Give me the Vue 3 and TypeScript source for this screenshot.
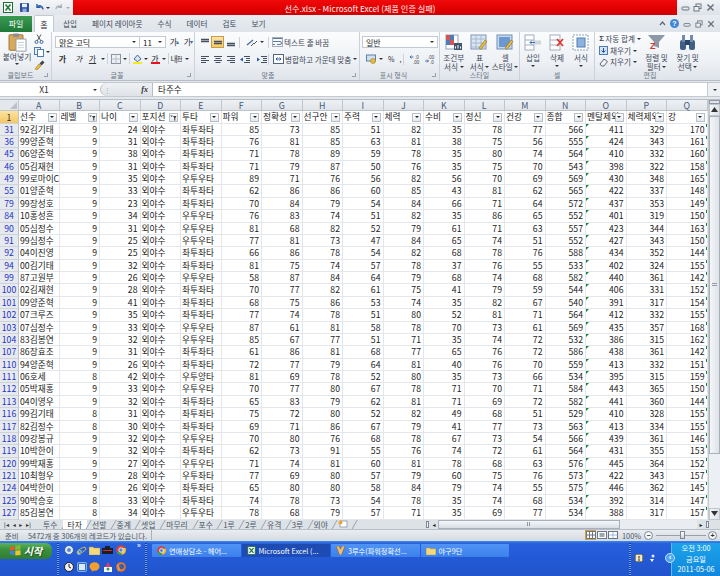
<script setup lang="ts">
const letters = 'ABCDEFGHIJKLMNOPQ'.split('');
const headers = ['선수', '레벨', '나이', '포지션', '투타', '파워', '정확성', '선구안', '주력', '체력', '수비', '정신', '건강', '종합', '멘탈제외', '체력제외', '강'];
const filtered = [1, 3];

// 행번호 이름 레벨 나이 투타 + 능력치
const raw = `31 92김기태 9 24 좌투좌타 85 73 85 51 82 35 78 77 566 411 329 170
36 99양준혁 9 31 좌투좌타 76 81 85 63 81 38 75 56 555 424 343 161
45 06양준혁 9 38 좌투좌타 71 78 89 59 78 35 80 74 564 410 332 160
46 05김재현 9 31 좌투좌타 71 79 87 50 76 35 75 70 543 398 322 158
49 99로마이C 9 35 우투우타 89 71 76 56 82 56 70 69 569 430 348 165
55 01양준혁 9 33 좌투좌타 62 86 86 60 85 43 81 62 565 422 337 148
79 99장성호 9 23 좌투좌타 70 84 79 54 84 66 71 64 572 437 353 149
84 10홍성흔 9 34 우투우타 76 83 74 51 82 35 86 65 552 401 319 150
90 05심정수 9 31 우투우타 81 68 82 52 79 61 71 63 557 423 344 163
91 99심정수 9 25 우투우타 77 81 73 47 84 65 74 51 552 427 343 150
92 04이진영 9 25 좌투좌타 66 86 78 54 82 68 78 76 588 434 352 144
94 00김기태 9 32 좌투좌타 81 75 74 57 78 37 76 55 533 402 324 155
99 87고원부 9 26 우투우타 58 87 84 64 79 68 74 68 582 440 361 142
100 02김재현 9 28 좌투좌타 70 77 82 61 75 41 79 59 544 406 331 152
101 09양준혁 9 41 좌투좌타 68 75 86 53 74 35 82 67 540 391 317 154
102 07크루즈 9 35 좌투좌타 77 74 78 51 80 52 81 71 564 412 332 155
103 07심정수 9 33 우투우타 87 61 81 58 78 70 73 61 569 435 357 168
104 83김봉연 9 32 우투우타 85 67 77 51 71 35 74 72 532 386 315 162
107 86장효조 9 31 좌투좌타 61 86 81 68 77 65 76 72 586 438 361 142
110 94양준혁 9 26 좌투좌타 72 77 79 64 81 40 76 70 559 413 332 151
111 06호세 8 42 우투양타 81 69 78 52 80 35 73 66 534 395 315 159
112 05박재홍 9 33 우투우타 70 77 80 67 78 71 70 71 584 443 365 150
113 04이영우 9 32 좌투좌타 65 83 79 62 81 71 69 72 582 441 360 144
116 99김기태 8 31 좌투좌타 75 72 80 52 82 49 68 51 529 410 328 155
117 82김정수 8 30 좌투좌타 69 71 86 67 79 41 77 73 563 413 334 155
118 09강봉규 9 32 우투우타 70 80 76 68 78 67 73 54 566 439 361 146
119 10박한이 9 32 좌투좌타 62 73 91 55 76 74 72 61 564 431 355 153
120 99박재홍 9 27 우투우타 71 74 81 60 81 78 68 63 576 445 364 152
121 10최형우 9 28 우투좌타 77 69 80 57 79 60 75 76 573 422 343 157
124 04박한이 9 26 좌투좌타 65 80 80 58 84 79 74 55 575 446 362 145
125 90박승호 8 33 좌투좌타 74 78 73 54 78 35 74 68 534 392 314 147
127 85김봉연 8 34 우투우타 78 68 79 57 71 35 69 77 534 388 317 157`;

const rows = raw.split('\n').map((line) => {
  const p = line.split(' ');
  return { no: p[0], cells: [p[1], p[2], p[3], '외야수', ...p.slice(4)] };
});

const tabs = ['투수', '타자', '선발', '중계', '셋업', '마무리', '포수', '1루', '2루', '유격', '3루', '외야'];
const menu = ['삽입', '페이지 레이아웃', '수식', '데이터', '검토', '보기'];
</script>

<template>
  <div class="excel">
    <!-- 제목 표시줄 -->
    <header class="titlebar">
      <div class="qat">
        <svg width="10" height="11" viewBox="0 0 10 11"><rect x=".5" y=".5" width="9" height="10" fill="#fff" stroke="#1f6d33" /><path d="M2.5 2.5l5 6M7.5 2.5l-5 6" stroke="#1f7a3a" stroke-width="1.6" /></svg>
        <i class="qsep"></i>
        <svg width="9" height="9" viewBox="0 0 9 9"><rect width="9" height="9" rx="1" fill="#2b4f9e" /><rect x="2" y=".6" width="5" height="3.6" fill="#e6eefb" /><rect x="2.4" y="5.6" width="4.2" height="3.4" fill="#8fa8d8" /></svg>
        <svg class="ml5" width="10" height="9" viewBox="0 0 10 9"><path d="M3 1v3.4h3.6" fill="none" stroke="#2a5caa" stroke-width="1.4" /><path d="M3.2 4.2C5 2 8.5 2.6 9 6.4" fill="none" stroke="#2a5caa" stroke-width="1.6" /></svg>
        <i class="caret dark"></i>
        <svg class="ml5" width="9" height="9" viewBox="0 0 10 9"><path d="M7 1v3.4H3.400M6.800 4.200C5 2 1.500 2.600 1 6.400" fill="none" stroke="#a7adb5" stroke-width="1.4" /></svg>
        <i class="caret"></i>
        <i class="qsep ml5"></i>
        <svg width="6" height="7" viewBox="0 0 6 7"><path d="M0 1h6M1 4h4l-2 2.5z" stroke="#333" fill="#333" stroke-width=".8" /></svg>
      </div>
      <div class="title">선수.xlsx - Microsoft Excel (제품 인증 실패)</div>
      <div class="winctl">
        <svg width="9" height="9" viewBox="0 0 9 9"><rect x="1" y="4" width="7" height="3" rx="1" fill="none" stroke="#6b7682" /></svg>
        <svg width="9" height="9" viewBox="0 0 9 9"><rect x="3" y="1" width="5" height="4.5" fill="#eef1f4" stroke="#6b7682" /><rect x="1" y="3.5" width="5" height="4.5" fill="#eef1f4" stroke="#6b7682" /></svg>
        <svg width="9" height="9" viewBox="0 0 9 9"><path d="M1.5 1.5l6 6M7.5 1.5l-6 6" stroke="#6b7682" stroke-width="1.6" /></svg>
      </div>
    </header>

    <!-- 리본 탭 -->
    <nav class="tabsbar">
      <div class="file-tab">파일</div>
      <div class="home-tab">홈</div>
      <div v-for="m in menu" :key="m" class="menu-tab">{{ m }}</div>
      <div class="help-icons">
        <svg width="7" height="7" viewBox="0 0 7 7"><path d="M1 5l2.5-3L6 5" fill="none" stroke="#5b6672" stroke-width="1.2" /></svg>
        <span class="help">?</span>
        <svg width="8" height="8" viewBox="0 0 9 9"><rect x="1" y="4" width="7" height="3" rx="1" fill="none" stroke="#6b7682" /></svg>
        <svg width="8" height="8" viewBox="0 0 9 9"><rect x="3" y="1" width="5" height="4.5" fill="#eef1f4" stroke="#6b7682" /><rect x="1" y="3.5" width="5" height="4.5" fill="#eef1f4" stroke="#6b7682" /></svg>
        <svg width="8" height="8" viewBox="0 0 9 9"><path d="M1.5 1.5l6 6M7.5 1.5l-6 6" stroke="#6b7682" stroke-width="1.5" /></svg>
      </div>
    </nav>

    <!-- 리본 -->
    <section class="ribbon">
      <div class="group g-clip">
        <div class="g-body clip-body">
          <div class="big paste">
            <svg width="19" height="19" viewBox="0 0 19 22" preserveAspectRatio="none"><rect x="1" y="2" width="14" height="18" rx="1" fill="#d9a95a" stroke="#9a7433" /><rect x="5" y=".5" width="6" height="4" rx="1" fill="#8f8f8f" /><path d="M8 7h10v14H8z" fill="#fff" stroke="#8d99a8" /><path d="M10 11h6M10 14h6M10 17h6" stroke="#c5ccd6" /></svg>
            <span>붙여넣기</span>
            <i class="caret dark"></i>
          </div>
          <div class="clip-tools">
            <svg width="10" height="10" viewBox="0 0 10 10"><circle cx="2.5" cy="8" r="1.5" fill="none" stroke="#3b6aa8" /><circle cx="7.5" cy="8" r="1.5" fill="none" stroke="#3b6aa8" /><path d="M3.2 6.8L7 .5M6.8 6.800L3 .5" stroke="#555" /></svg>
            <div class="row-c">
              <svg width="10" height="10" viewBox="0 0 10 10"><rect x=".5" y=".5" width="6" height="7" fill="#eaf1fb" stroke="#4d7db8" /><rect x="3.5" y="2.5" width="6" height="7" fill="#fff" stroke="#4d7db8" /></svg>
              <i class="caret dark"></i>
            </div>
            <svg width="11" height="10" viewBox="0 0 11 10"><path d="M1 9l4-5 2 2-4 4z" fill="#e8b93e" stroke="#9a7a20" stroke-width=".6" /><path d="M5.5 3.5l3-3 2 2-3 3z" fill="#444" /></svg>
          </div>
        </div>
        <div class="g-label">클립보드<i class="launcher"></i></div>
      </div>

      <div class="group g-font">
        <div class="g-body tool-rows">
          <div class="row-c">
            <div class="combo name">맑은 고딕<i class="caret dark"></i></div>
            <div class="combo size">11<i class="caret dark"></i></div>
            <span class="t-glyph up ml3">가<em>▴</em></span>
            <span class="t-glyph up ml3">가<em>▾</em></span>
          </div>
          <div class="row-c r2">
            <span class="t-glyph b">가</span>
            <span class="t-glyph i">가</span>
            <span class="t-glyph u">가</span><i class="caret dark"></i>
            <i class="vsep"></i>
            <svg width="10" height="10" viewBox="0 0 10 10"><rect x=".5" y=".5" width="9" height="9" fill="none" stroke="#8a93a0" /><path d="M5 .5v9M.5 5h9" stroke="#b5bcc6" /></svg>
            <i class="caret dark"></i>
            <i class="vsep"></i>
            <span class="swatch first">
              <svg width="11" height="8" viewBox="0 0 11 8"><path d="M2 5l3.5-4L9 5 5.5 7.5z" fill="#dfe6ef" stroke="#3f6aa5" /></svg>
              <b class="bar yellow"></b>
            </span>
            <i class="caret dark"></i>
            <span class="swatch"><span class="t-glyph sw">가</span><b class="bar red"></b></span>
            <i class="caret dark"></i>
            <i class="vsep"></i>
            <span class="t-glyph wrapk">내<em class="blue">천</em></span><i class="caret dark"></i>
          </div>
        </div>
        <div class="g-label">글꼴<i class="launcher"></i></div>
      </div>

      <div class="group g-align">
        <div class="g-body tool-rows">
          <div class="row-c">
            <span class="al"><svg width="10" height="9" viewBox="0 0 10 9"><path d="M1 1.5h8M1 3.5h8" stroke="#44505e" stroke-width="1.3" /></svg></span>
            <span class="al on"><svg width="10" height="9" viewBox="0 0 10 9"><path d="M1 3.5h8M1 5.5h8" stroke="#44505e" stroke-width="1.3" /></svg></span>
            <span class="al"><svg width="10" height="9" viewBox="0 0 10 9"><path d="M1 5.5h8M1 7.5h8" stroke="#44505e" stroke-width="1.3" /></svg></span>
            <i class="vsep"></i>
            <svg class="ml3" width="12" height="9" viewBox="0 0 12 9"><path d="M1 7L7 2" stroke="#4d6f9e" stroke-width="1.4" /><path d="M5 8l3-3M8 6l3-3" stroke="#555" /></svg>
            <i class="caret dark"></i>
            <i class="vsep s2"></i>
            <svg class="ml3" width="11" height="10" viewBox="0 0 11 10"><path d="M1 1.5h9M1 4.5h7a1.5 1.5 0 0 1 0 3H5M1 7.5h2" fill="none" stroke="#5c7aa0" /><rect x=".5" y=".5" width="10" height="9" fill="none" stroke="#a4aeba" /></svg>
            <span class="lbl">텍스트 줄 바꿈</span>
          </div>
          <div class="row-c r2">
            <span class="al"><svg width="10" height="9" viewBox="0 0 10 9"><path d="M1 1.5h8M1 3.5h5M1 5.5h8M1 7.5h5" stroke="#44505e" /></svg></span>
            <span class="al"><svg width="10" height="9" viewBox="0 0 10 9"><path d="M1 1.5h8M2.5 3.5h5M1 5.5h8M2.5 7.5h5" stroke="#44505e" /></svg></span>
            <span class="al"><svg width="10" height="9" viewBox="0 0 10 9"><path d="M1 1.5h8M4 3.5h5M1 5.5h8M4 7.5h5" stroke="#44505e" /></svg></span>
            <svg class="ml2" width="12" height="9" viewBox="0 0 12 9"><path d="M5 1.5h6M7 3.5h4M7 5.5h4M5 7.5h6" stroke="#44505e" /><path d="M4 2.5L1 4.5l3 2z" fill="#2a5caa" /></svg>
            <svg class="ml5" width="12" height="9" viewBox="0 0 12 9"><path d="M5 1.5h6M7 3.5h4M7 5.5h4M5 7.5h6" stroke="#44505e" /><path d="M1 2.5l3 2-3 2z" fill="#2a5caa" /></svg>
            <i class="vsep s3"></i>
            <svg class="ml3" width="11" height="10" viewBox="0 0 11 10"><rect x=".5" y=".5" width="10" height="9" fill="#fff" stroke="#55667c" /><path d="M3 5h5M3 5l1.500-1.500M3 5l1.500 1.500M8 5L6.500 3.500M8 5L6.500 6.500" stroke="#2a5caa" /></svg>
            <span class="lbl">병합하고 가운데 맞춤</span>
            <i class="caret dark"></i>
          </div>
        </div>
        <div class="g-label">맞춤<i class="launcher"></i></div>
      </div>

      <div class="group g-num">
        <div class="g-body tool-rows">
          <div class="combo num">일반<i class="caret dark"></i></div>
          <div class="row-c r2 num-row">
            <svg class="ml3" width="11" height="10" viewBox="0 0 11 10"><rect x=".5" y="1" width="9" height="6" fill="#cfe0f3" stroke="#5d7fa8" /><circle cx="7" cy="7" r="2.5" fill="#e6be3d" stroke="#a1831f" stroke-width=".6" /></svg>
            <i class="caret dark"></i>
            <span class="sym ml5">%</span>
            <span class="sym ml5">,</span>
            <i class="vsep"></i>
            <svg class="ml3" width="12" height="10" viewBox="0 0 12 10"><text x="5" y="4.5" font-size="4.500" fill="#444" font-family="'Liberation Sans',sans-serif">.0</text><text x="3" y="9.500" font-size="4.500" fill="#444" font-family="'Liberation Sans',sans-serif">.00</text><path d="M0 3h3.500M1.500 1.500L0 3l1.500 1.500" fill="none" stroke="#2a5caa" stroke-width=".8" /></svg>
            <svg class="ml3" width="12" height="10" viewBox="0 0 12 10"><text x="3" y="4.500" font-size="4.500" fill="#444" font-family="'Liberation Sans',sans-serif">.00</text><text x="5" y="9.500" font-size="4.500" fill="#444" font-family="'Liberation Sans',sans-serif">.0</text><path d="M0 7h3.500M2 5.500L3.500 7 2 8.500" fill="none" stroke="#2a5caa" stroke-width=".8" /></svg>
          </div>
        </div>
        <div class="g-label">표시 형식<i class="launcher"></i></div>
      </div>

      <div class="group g-style">
        <div class="g-body bigs">
          <div class="big w25">
            <svg width="18" height="17" viewBox="0 0 18 17"><rect x="1" y="1" width="12" height="14" fill="#fff" stroke="#8fa3bb" /><rect x="1" y="1" width="4" height="5" fill="#d9534f" /><rect x="5" y="1" width="4" height="5" fill="#4a7ebb" /><rect x="1" y="6" width="4" height="5" fill="#4a7ebb" /><rect x="5" y="6" width="4" height="5" fill="#d9534f" /><rect x="9" y="9" width="8" height="7" fill="#40566f" /><path d="M10.5 14.500v-2M13 14.500v-3.500M15.500 14.500v-2" stroke="#fff" /></svg>
            <span>조건부</span><span>서식 <i class="caret dark in"></i></span>
          </div>
          <div class="big w25">
            <svg width="18" height="17" viewBox="0 0 18 17"><rect x="1" y="1" width="15" height="14" fill="#dce7f4" stroke="#7f97b3" /><path d="M1 5h15M1 9h15M1 13h15M6 1v14M11 1v14" stroke="#a6b9cf" /><path d="M9 14l6-8 2 1.500-6 8z" fill="#e8b93e" stroke="#7b6420" stroke-width=".5" /></svg>
            <span>표</span><span>서식 <i class="caret dark in"></i></span>
          </div>
          <div class="big w25">
            <svg width="18" height="17" viewBox="0 0 18 17"><rect x="1" y="1" width="15" height="14" fill="#c8daf0" stroke="#6d8db2" /><rect x="3" y="3" width="11" height="10" fill="#6c99d1" /><path d="M9 14l6-8 2 1.500-6 8z" fill="#e8b93e" stroke="#7b6420" stroke-width=".5" /></svg>
            <span>셀</span><span>스타일 <i class="caret dark in"></i></span>
          </div>
        </div>
        <div class="g-label plain">스타일</div>
      </div>

      <div class="group g-cell">
        <div class="g-body bigs cells">
          <div class="big w24">
            <svg width="18" height="17" viewBox="0 0 18 17"><rect x="1" y="1" width="9" height="15" fill="#fff" stroke="#a2aebb" /><path d="M1 6h9M1 11h9" stroke="#a2aebb" /><rect x="10" y="6.5" width="7" height="4" fill="#cfd6de" /><path d="M11 8.500H6M6 8.500l2-2M6 8.500l2 2" stroke="#3e6fae" /></svg>
            <span>삽입</span><i class="caret dark"></i>
          </div>
          <div class="big w24">
            <svg width="18" height="17" viewBox="0 0 18 17"><rect x="2" y="1" width="10" height="15" fill="#fff" stroke="#a2aebb" /><path d="M2 6h10M2 11h10" stroke="#a2aebb" /><path d="M9 5l6 7M15 5l-6 7" stroke="#e03a2e" stroke-width="1.8" /></svg>
            <span>삭제</span><i class="caret dark"></i>
          </div>
          <div class="big w24">
            <svg width="18" height="17" viewBox="0 0 18 17"><rect x="1" y="1" width="15" height="15" fill="#fff" stroke="#8fa3bb" stroke-dasharray="2 1" /><rect x="5" y="4" width="8" height="9" fill="#8fb2dd" stroke="#4d7db8" /></svg>
            <span>서식</span><i class="caret dark"></i>
          </div>
        </div>
        <div class="g-label plain">셀</div>
      </div>

      <div class="group g-edit">
        <div class="g-body edit-body">
          <div class="edit-list">
            <div class="row-c"><b class="sigma">Σ</b><span class="lbl">자동 합계</span><i class="caret dark"></i></div>
            <div class="row-c">
              <svg width="9" height="9" viewBox="0 0 9 9"><rect x=".5" y=".5" width="8" height="8" fill="#d5e4f6" stroke="#4d7db8" /><path d="M4.5 2v4M2.500 4.500l2 2 2-2" fill="none" stroke="#1f4f94" /></svg>
              <span class="lbl">채우기</span><i class="caret dark"></i>
            </div>
            <div class="row-c">
              <svg width="9" height="9" viewBox="0 0 9 9"><path d="M1 6l4-5 3.500 2.500L5 8H2.500z" fill="#f2f2f2" stroke="#5a6775" /></svg>
              <span class="lbl">지우기</span><i class="caret dark"></i>
            </div>
          </div>
          <div class="big w31">
            <svg width="19" height="17" viewBox="0 0 19 17"><path d="M1 1h17l-6 7v6l-5-2V8z" fill="#8d99a8" /><text x="3" y="15" font-size="9" font-weight="700" fill="#d23a2f" font-family="'Liberation Sans',sans-serif">Z</text></svg>
            <span>정렬 및</span><span>필터 <i class="caret dark in"></i></span>
          </div>
          <div class="big w31">
            <svg width="17" height="17" viewBox="0 0 17 17"><rect x="1" y="6" width="6" height="10" rx="2" fill="#3f5f88" /><rect x="10" y="6" width="6" height="10" rx="2" fill="#3f5f88" /><rect x="3" y="1" width="3" height="7" fill="#6f8cb0" /><rect x="11" y="1" width="3" height="7" fill="#6f8cb0" /><rect x="6" y="6" width="5" height="5" fill="#2b4668" /></svg>
            <span>찾기 및</span><span>선택 <i class="caret dark in"></i></span>
          </div>
        </div>
        <div class="g-label plain edit-label">편집</div>
      </div>
    </section>

    <!-- 수식 입력줄 -->
    <section class="formula">
      <div class="namebox">X1<i class="caret dark"></i></div>
      <div class="fx-area"><span class="pill">⋮</span><em>fx</em></div>
      <div class="finput">타주수</div>
      <div class="fdown"><i class="caret dark"></i></div>
    </section>

    <!-- 시트 -->
    <section class="sheet">
      <div class="grid">
        <div class="corner"><i></i></div>
        <div v-for="l in letters" :key="l" class="col-head">{{ l }}</div>

        <div class="row-head selected">1</div>
        <div v-for="(h, i) in headers" :key="h" class="cell head-cell">
          <span class="clip">{{ h }}</span>
          <span class="filter">
            <svg v-if="filtered.includes(i)" width="7" height="7" viewBox="0 0 7 7"><path d="M3 2h3.5L5.300 4v2.500H4.300V4z" fill="#333" /><path d="M1.5 3L.2 1.500h2.600z" fill="#333" /></svg>
            <i v-else class="tri"></i>
          </span>
        </div>

        <template v-for="r in rows" :key="r.no">
          <div class="row-head">{{ r.no }}</div>
          <div
            v-for="(c, i) in r.cells"
            :key="i"
            class="cell"
            :class="{ left: i === 0 || i === 3 || i === 4, flag: i === 14, flagend: i === 16 }"
          >{{ c }}</div>
        </template>
      </div>

      <div class="vscroll">
        <i class="split"></i>
        <span class="sb-btn"><svg width="7" height="5" viewBox="0 0 7 5"><path d="M3.5 0L7 5H0z" fill="#333" /></svg></span>
        <div class="vthumb"><i></i></div>
        <div class="vtrack"></div>
        <span class="sb-btn"><svg width="7" height="5" viewBox="0 0 7 5"><path d="M3.5 5L7 0H0z" fill="#333" /></svg></span>
      </div>
    </section>

    <!-- 시트 탭 -->
    <section class="sheetbar">
      <div class="nav">
        <span>|◂</span><span>◂</span><span>▸</span><span>▸|</span>
      </div>
      <div class="sheet-tabs">
        <span
          v-for="t in tabs"
          :key="t"
          class="stab"
          :class="{ active: t === '타자', wide: t === '마무리', narrow: t.endsWith('루') && t !== '마무리' }"
        >{{ t }}</span>
        <span class="stab add">
          <svg width="10" height="8" viewBox="0 0 10 8"><rect x="2" y="1" width="7" height="6" fill="#fff" stroke="#7c8b9c" stroke-width=".7" /><circle cx="2.5" cy="2.5" r="2" fill="#e9a829" /></svg>
        </span>
      </div>
      <div class="hscroll">
        <i class="hsplit"></i>
        <span class="harrow">◂</span>
        <div class="hthumb"><i></i></div>
        <div class="htrack"></div>
        <span class="harrow">▸</span>
        <i class="hsplit"></i>
      </div>
    </section>

    <!-- 상태 표시줄 -->
    <footer class="status">
      <span class="ready">준비</span>
      <span class="rec">5472개 중 306개의 레코드가 있습니다.</span>
      <i class="st-sep"></i>
      <div class="views">
        <span class="view on"><svg width="10" height="8" viewBox="0 0 10 8"><rect x=".5" y=".5" width="9" height="7" fill="#fff" stroke="#6b7682" /><path d="M3.5 .5v7M6.5 .5v7M.5 4h9" stroke="#6b7682" /></svg></span>
        <span class="view"><svg width="10" height="8" viewBox="0 0 10 8"><rect x=".5" y=".5" width="9" height="7" fill="#fff" stroke="#6b7682" /><rect x="2.5" y="2" width="5" height="4" fill="#9aa6b3" /></svg></span>
        <span class="view"><svg width="10" height="8" viewBox="0 0 10 8"><rect x=".5" y=".5" width="9" height="7" fill="#fff" stroke="#6b7682" /><path d="M5 .5v7M.5 4h9" stroke="#4d7db8" stroke-dasharray="1 1" /></svg></span>
      </div>
      <span class="zoom">100%</span>
      <span class="zbtn">−</span>
      <div class="slider"><i></i></div>
      <span class="zbtn">+</span>
    </footer>

    <!-- 작업 표시줄 -->
    <footer class="taskbar">
      <div class="start">
        <svg width="11" height="11" viewBox="0 0 11 11"><path d="M0 2l4.5-1v4L0 5.500z" fill="#e8592b" /><path d="M5.300 .8L10.500 0v4.500L5.300 5z" fill="#7dbb3c" /><path d="M0 6.200l4.500-.4v4.200L0 9.500z" fill="#3f82d8" /><path d="M5.300 5.700l5.200-.4V10l-5.200.5z" fill="#f0c32e" /></svg>
        <span>시작</span>
      </div>
      <i class="dots"></i>
      <div class="quick">
        <svg width="10" height="10" viewBox="0 0 10 10"><circle cx="5" cy="5" r="4.5" fill="#dde7f3" stroke="#345c96" /><circle cx="5" cy="5" r="2" fill="#5d8ac4" /></svg>
        <svg width="11" height="11" viewBox="0 0 11 11"><text x="1" y="9.500" font-size="11" font-style="italic" font-weight="700" fill="#6fc2f4" font-family="'Liberation Serif',serif">e</text><ellipse cx="5.5" cy="5.5" rx="5" ry="2" fill="none" stroke="#f2c230" stroke-width=".8" transform="rotate(-30 5.5 5.5)" /></svg>
        <svg width="11" height="9" viewBox="0 0 11 9"><path d="M0 1h4l1 1h6v7H0z" fill="#f5d978" stroke="#b5902c" stroke-width=".5" /></svg>
        <svg width="11" height="8" viewBox="0 0 11 8"><rect y="2" width="11" height="6" fill="#1d1d2a" /><rect x="3" width="5" height="3" fill="#1d1d2a" /><rect x="1" y="4" width="9" height="1" fill="#c33" /></svg>
        <svg width="10" height="10" viewBox="0 0 10 10"><circle cx="5" cy="5" r="4.8" fill="#d9432f" /><path d="M5 5L.8 7.400A4.800 4.800 0 0 0 6 9.700z" fill="#3ea24c" /><path d="M5 5l1 4.700A4.800 4.800 0 0 0 9.500 3H5z" fill="#f3c42f" /><circle cx="5" cy="5" r="2.2" fill="#4a86e8" stroke="#fff" stroke-width=".8" /></svg>
        <svg width="10" height="10" viewBox="0 0 10 10"><circle cx="5" cy="5" r="4.5" fill="#f2f2f2" stroke="#222" /><path d="M5 2v3l2 1" stroke="#222" fill="none" /></svg>
        <svg width="10" height="10" viewBox="0 0 10 10"><rect x=".5" y=".5" width="9" height="9" rx="1" fill="#3a6fc3" stroke="#cfe" stroke-width=".5" /><rect x="2" y="2" width="6" height="6" fill="#dbe9fb" /></svg>
        <svg width="11" height="10" viewBox="0 0 11 10"><ellipse cx="5.5" cy="4.5" rx="5" ry="4.2" fill="#f3a02a" /><path d="M3 8l-.5 2L5 8.500z" fill="#f3a02a" /></svg>
        <svg width="10" height="10" viewBox="0 0 10 10"><rect x="1" y="5" width="8" height="5" fill="#f6f6f6" /><path d="M5 0l3 5H2z" fill="#d43d6f" /><circle cx="5" cy="7" r="1.5" fill="#2d9c59" /></svg>
        <svg width="10" height="10" viewBox="0 0 10 10"><circle cx="5" cy="5" r="4.8" fill="#e8762b" /><circle cx="5.5" cy="4.5" r="2.6" fill="#3b5fa8" /><path d="M1 3c2 1 3 4 1 6" fill="none" stroke="#f6c14a" /></svg>
        <span class="more">»</span>
      </div>
      <i class="dots"></i>
      <div class="task">
        <svg width="9" height="9" viewBox="0 0 10 10"><circle cx="5" cy="5" r="4.8" fill="#d9432f" /><path d="M5 5L.8 7.400A4.800 4.800 0 0 0 6 9.700z" fill="#3ea24c" /><path d="M5 5l1 4.700A4.800 4.800 0 0 0 9.500 3H5z" fill="#f3c42f" /><circle cx="5" cy="5" r="2.2" fill="#4a86e8" stroke="#fff" stroke-width=".8" /></svg>
        <span>연애상담소 - 헤어...</span>
      </div>
      <div class="task pressed">
        <svg width="9" height="9" viewBox="0 0 10 11"><rect x=".5" y=".5" width="9" height="10" fill="#fff" stroke="#1f6d33" /><path d="M2.5 2.5l5 6M7.5 2.5l-5 6" stroke="#1f7a3a" stroke-width="1.6" /></svg>
        <span>Microsoft Excel (...</span>
      </div>
      <div class="task">
        <svg width="9" height="9" viewBox="0 0 9 9"><path d="M0 0h3l1.500 3L6 0h3L5.500 9h-2z" fill="#e3c07a" stroke="#8a4a2a" stroke-width=".5" /></svg>
        <span>3루수(파워정확선...</span>
      </div>
      <div class="task">
        <svg width="10" height="8" viewBox="0 0 11 9"><path d="M0 1h4l1 1h6v7H0z" fill="#f5d978" stroke="#b5902c" stroke-width=".5" /></svg>
        <span>야구9단</span>
      </div>
      <div class="tray">
        <i class="dots"></i>
        <svg class="tray-ic" width="8" height="8" viewBox="0 0 8 8"><rect width="8" height="8" rx="1" fill="#f2e8b8" stroke="#222" /><path d="M4 2v2.500M3 6h2" stroke="#222" /></svg>
        <svg class="tray-ic" width="8" height="9" viewBox="0 0 8 9"><circle cx="5" cy="2" r="1.5" fill="#dfe8f5" /><path d="M2 5h4L4 8z" fill="#fff" /></svg>
        <span class="chev">‹</span>
      </div>
      <div class="clock">
        <span>오전 3:00</span>
        <span>금요일</span>
        <span>2011-05-06</span>
      </div>
    </footer>
  </div>
</template>

<style scoped>
.excel {
  width: 720px;
  height: 576px;
  overflow: hidden;
  display: flex;
  flex-direction: column;
  font-family: "Noto Sans CJK KR", "Noto Sans", sans-serif;
  font-size: 8px;
  color: #333;
  background: #e4e8ed;
}
svg {
  flex: none;
  display: block;
}
.ml2 { margin-left: 2px; }
.ml3 { margin-left: 3px; }
.ml5 { margin-left: 5px; }

/* 공통 */
.caret {
  display: inline-block;
  flex: none;
  width: 0;
  height: 0;
  margin-left: 2px;
  border-left: 2px solid transparent;
  border-right: 2px solid transparent;
  border-top: 2px solid #a7adb5;
}
.caret.dark { border-top-color: #333; }
.caret.in { vertical-align: middle; margin-left: 0; }
.row-c {
  display: flex;
  align-items: center;
}

/* 제목 표시줄 */
.titlebar {
  height: 15px;
  flex: none;
  display: flex;
}
.qat {
  width: 73px;
  display: flex;
  align-items: center;
  padding-left: 3px;
  box-sizing: border-box;
  background: linear-gradient(#f4f6f8, #dfe4ea);
}
.qsep {
  width: 1px;
  height: 11px;
  margin: 0 4px 0 3px;
  background: #b6bec8;
}
.title {
  flex: 1;
  padding-right: 30px;
  text-align: center;
  line-height: 17px;
  font-size: 8.2px;
  color: #fff0f0;
  background: linear-gradient(#f00a0c, #e00000 60%, #d00000);
}
.winctl {
  width: 43px;
  display: flex;
  align-items: center;
  justify-content: space-around;
  padding: 0 3px 0 2px;
  box-sizing: border-box;
  background: linear-gradient(#f0f3f6, #dde2e8);
}

/* 리본 탭 */
.tabsbar {
  height: 17px;
  flex: none;
  display: flex;
  align-items: flex-end;
  background: linear-gradient(#e8ecf0, #dfe4ea);
}
.file-tab {
  width: 32px;
  height: 16px;
  line-height: 15px;
  text-align: center;
  color: #fff;
  font-size: 8px;
  background: linear-gradient(#3a9a52, #1e7837);
}
.home-tab {
  width: 20px;
  height: 17px;
  margin: 0 9px 0 2px;
  line-height: 17px;
  text-align: center;
  background: linear-gradient(#fff, #f8fafc);
  border: 1px solid #c4cad2;
  border-bottom: 0;
  box-sizing: border-box;
  border-radius: 2px 2px 0 0;
}
.menu-tab {
  height: 17px;
  margin: 0 15px 0 0;
  line-height: 17px;
  color: #3d4856;
  font-size: 7.6px;
  white-space: nowrap;
}
.help-icons {
  margin-left: auto;
  display: flex;
  align-items: center;
  gap: 4px;
  height: 17px;
  padding-right: 5px;
}
.help {
  width: 9px;
  height: 9px;
  border-radius: 50%;
  background: #3f86d8;
  color: #fff;
  font: 700 7px/9px "Liberation Sans", sans-serif;
  text-align: center;
}

/* 리본 */
.ribbon {
  height: 49px;
  flex: none;
  display: flex;
  box-sizing: border-box;
  background: linear-gradient(#fbfcfd, #eef1f5 60%, #dfe4ea);
  border-bottom: 1px solid #b7bdc5;
}
.group {
  display: flex;
  flex-direction: column;
  box-sizing: border-box;
  border-right: 1px solid #cdd2d9;
}
.g-clip { width: 52px; }
.g-font { width: 143px; }
.g-align { width: 165px; }
.g-num { width: 80px; }
.g-style { width: 80px; }
.g-cell { width: 75px; }
.g-edit { width: 125px; border-right: 0; }
.g-body {
  flex: 1;
  min-height: 0;
  font-size: 7.6px;
  color: #3d4856;
}
.g-label {
  height: 9px;
  position: relative;
  text-align: center;
  line-height: 9px;
  font-size: 7px;
  color: #6b7684;
  padding-right: 10px;
}
.g-font .g-label { padding-right: 12px; }
.g-align .g-label { padding-right: 18px; }
.g-num .g-label { padding-right: 12px; }
.g-label.plain { padding-right: 0; }
.g-label.edit-label { padding-right: 15px; }
.launcher {
  position: absolute;
  right: 3px;
  top: 2px;
  width: 4px;
  height: 4px;
  border: 1px solid #97a0ac;
  border-top-width: 0;
  border-left-width: 0;
  box-sizing: border-box;
}
.big {
  display: flex;
  flex-direction: column;
  align-items: center;
  line-height: 9px;
  white-space: nowrap;
}
.big svg { margin-bottom: 1.5px; }
.clip-body {
  display: flex;
  padding-top: 1px;
}
.paste {
  width: 34px;
  font-size: 7.8px;
}
.paste svg { margin-bottom: 0; }
.paste .caret { margin: 2px 0 0; }
.clip-tools {
  display: flex;
  flex-direction: column;
  gap: 3px;
  padding-top: 1px;
}
.tool-rows {
  padding: 4px 0 0 3px;
}
.row-c.r2 {
  margin-top: 5px;
}
.combo {
  height: 12px;
  box-sizing: border-box;
  display: flex;
  align-items: center;
  justify-content: space-between;
  padding: 0 3px;
  background: #fff;
  border: 1px solid #c3cad3;
  color: #222;
  font-size: 8px;
}
.combo.name { width: 85px; }
.combo.size { width: 27px; margin-left: -1px; }
.combo.num { width: 76px; margin-left: -1px; }
.t-glyph {
  display: inline-flex;
  align-items: flex-start;
  justify-content: center;
  width: 13px;
  flex: none;
  line-height: 10px;
  font-size: 8px;
  color: #333;
}
.t-glyph em {
  font-style: normal;
  font-size: 6px;
  color: #3f6aa5;
  margin-left: -1px;
}
.t-glyph em.blue { color: #333; }
.t-glyph.up { width: 11px; }
.t-glyph.b { font-weight: 700; margin-left: 1px; }
.t-glyph.i { font-style: italic; margin-left: 3px; }
.t-glyph.u { text-decoration: underline; margin-left: 1px; }
.t-glyph.sw { color: #222; width: 10px; height: 8px; }
.t-glyph.wrapk { margin-left: -2px; }
.vsep {
  width: 1px;
  height: 11px;
  flex: none;
  margin: 0 3px 0 2px;
  background: #ccd2d9;
}
.vsep.s2 { margin: 0 0 0 4px; }
.vsep.s3 { margin: 0 1px 0 0; }
.swatch {
  display: flex;
  flex-direction: column;
  align-items: center;
  width: 10px;
  margin-left: 2px;
}
.swatch.first { margin-left: -1px; }
.bar {
  display: block;
  width: 9px;
  height: 2px;
}
.bar.yellow { background: #f7e91c; }
.bar.red { background: #e6141a; }
.al {
  width: 13px;
  height: 12px;
  flex: none;
  display: flex;
  align-items: center;
  justify-content: center;
  box-sizing: border-box;
}
.al.on {
  background: linear-gradient(#fbe5a8, #f7c760);
  border: 1px solid #c99c48;
}
.lbl {
  margin-left: 1px;
  font-size: 7.6px;
  color: #3d4856;
  white-space: nowrap;
}
.num-row { height: 12px; }
.sym {
  color: #333;
  font-size: 7px;
  line-height: 10px;
}
.bigs {
  display: flex;
  justify-content: space-around;
  padding: 2px 1px 0;
}
.bigs.cells { justify-content: flex-start; padding-left: 1px; }
.bigs .caret { margin: 3px 0 0; }
.bigs .caret.in { margin: 0; }
.w25 { width: 25px; }
.w24 { width: 24px; }
.w31 { width: 31px; }
.edit-body {
  display: flex;
  padding: 2px 0 0 4px;
}
.edit-list {
  width: 42px;
  display: flex;
  flex-direction: column;
  gap: 1.5px;
  line-height: 10px;
}
.edit-list .row-c svg { margin-right: 1px; }
.sigma {
  width: 9px;
  text-align: center;
  font: 700 8px/10px "Liberation Sans", sans-serif;
}

/* 수식 입력줄 */
.formula {
  height: 15px;
  flex: none;
  margin-top: 1px;
  display: flex;
  box-sizing: border-box;
  background: #fff;
  border-top: 1px solid #c4c9d0;
  border-bottom: 1px solid #c4c9d0;
}
.namebox {
  width: 100px;
  position: relative;
  text-align: center;
  padding-right: 12px;
  box-sizing: border-box;
  line-height: 13px;
  font-size: 8.6px;
}
.namebox .caret {
  position: absolute;
  right: 3px;
  top: 6px;
}
.fx-area {
  width: 53px;
  display: flex;
  align-items: center;
  background: linear-gradient(#eef1f4, #dfe3e8);
  border-left: 1px solid #b8bec6;
  border-right: 1px solid #b8bec6;
  border-radius: 7px 0 0 7px;
  box-sizing: border-box;
  padding-left: 3px;
}
.pill {
  font-size: 7px;
  color: #a4abb4;
  line-height: 12px;
}
.fx-area em {
  margin-left: auto;
  margin-right: 4px;
  font: italic 700 8px "Liberation Serif", serif;
  color: #333;
}
.finput {
  flex: 1;
  padding-left: 5px;
  font-size: 8.6px;
  line-height: 13px;
  color: #222;
}
.fdown {
  width: 12px;
  display: flex;
  align-items: center;
  justify-content: center;
  background: #eef1f4;
  border-left: 1px solid #c4c9d0;
}

/* 시트 */
.sheet {
  flex: none;
  margin-top: 1.5px;
  height: 421px;
  display: flex;
  overflow: hidden;
  background: #fff;
  border-top: 1px solid #b8bec6;
  box-sizing: border-box;
}
.grid {
  width: 707.5px;
  flex: none;
  display: grid;
  grid-template-columns: 19px repeat(17, 40.5px);
  grid-template-rows: 11px 13px repeat(32, 12.375px);
  align-content: start;
  font-size: 8.7px;
  color: #222;
}
.corner {
  background: #e4e8ed;
  border-right: 1px solid #c0c6ce;
  border-bottom: 1px solid #c0c6ce;
  box-sizing: border-box;
  position: relative;
}
.corner i {
  position: absolute;
  right: 1px;
  bottom: 1px;
  width: 0;
  height: 0;
  border-left: 7px solid transparent;
  border-bottom: 7px solid #b9c0c9;
}
.col-head {
  text-align: center;
  line-height: 11px;
  color: #45597a;
  font-size: 8.8px;
  background: linear-gradient(#eef1f4, #e0e4e9);
  border-right: 1px solid #c0c6ce;
  border-bottom: 1px solid #bcc2ca;
  box-sizing: border-box;
}
.row-head {
  text-align: center;
  line-height: 12px;
  color: #1f34c4;
  background: #e6eaef;
  border-right: 1px solid #bcc2ca;
  border-bottom: 1px solid #ced3d9;
  box-sizing: border-box;
  overflow: hidden;
}
.row-head.selected {
  background: linear-gradient(#fbe3a0, #f6c765);
  color: #333;
  line-height: 13px;
}
.cell {
  position: relative;
  box-sizing: border-box;
  padding-right: 2px;
  text-align: right;
  line-height: 11.8px;
  white-space: nowrap;
  overflow: hidden;
  border-right: 1px solid #e3e6ea;
  border-bottom: 1px solid #e3e6ea;
}
.cell.left {
  text-align: left;
  padding: 0 0 0 1px;
}
.cell.flag::before {
  content: "";
  position: absolute;
  left: 0;
  top: 0;
  width: 0;
  height: 0;
  border-top: 3px solid #17803a;
  border-right: 3px solid transparent;
}
.cell.flagend::after {
  content: "";
  position: absolute;
  right: 0;
  top: 0;
  width: 1px;
  height: 3px;
  background: #17803a;
}
.head-cell {
  display: flex;
  align-items: center;
  text-align: left;
  padding: 0 2px 0 1px;
  line-height: 13px;
}
.clip {
  flex: 1;
  min-width: 0;
  overflow: hidden;
}
.filter {
  position: absolute;
  right: 2px;
  top: 2px;
  width: 9px;
  height: 9px;
  box-sizing: border-box;
  display: flex;
  align-items: center;
  justify-content: center;
  background: linear-gradient(#fff, #e4e8ed);
  border: 1px solid #b8bec6;
}
.tri {
  width: 0;
  height: 0;
  border-left: 2px solid transparent;
  border-right: 2px solid transparent;
  border-top: 2.5px solid #222;
}

/* 세로 스크롤 */
.vscroll {
  flex: 1;
  display: flex;
  flex-direction: column;
  align-items: stretch;
  background: #eceff3;
  border-left: 1px solid #c4c9d0;
}
.split {
  height: 4px;
  flex: none;
  background: #dfe3e8;
  border: 1px solid #8f98a4;
  box-sizing: border-box;
}
.sb-btn {
  height: 12px;
  flex: none;
  display: flex;
  align-items: center;
  justify-content: center;
  background: linear-gradient(90deg, #f4f6f8, #dde2e7);
  border: 1px solid #c0c6ce;
  box-sizing: border-box;
}
.vthumb {
  height: 338px;
  flex: none;
  display: flex;
  align-items: center;
  justify-content: center;
  background: linear-gradient(90deg, #f4f6f8, #dde2e7);
  border: 1px solid #a9b0ba;
  box-sizing: border-box;
}
.vthumb i {
  width: 5px;
  height: 4px;
  background: repeating-linear-gradient(#8f98a4 0 1px, transparent 1px 2px);
}
.vtrack { flex: 1; }

/* 시트 탭 */
.sheetbar {
  height: 9.5px;
  flex: none;
  display: flex;
  background: #dde2e7;
  box-sizing: border-box;
  overflow: hidden;
}
.nav {
  width: 38px;
  flex: none;
  display: flex;
  justify-content: space-around;
  padding: 0 5px 0 2px;
  box-sizing: border-box;
  font: 6px/10px "DejaVu Sans", sans-serif;
  color: #333;
  white-space: nowrap;
}
.sheet-tabs {
  width: 387px;
  flex: none;
  display: flex;
  overflow: hidden;
}
.stab {
  position: relative;
  width: 24.5px;
  flex: none;
  text-align: center;
  font-size: 7.8px;
  line-height: 9.5px;
  color: #4a5666;
  box-sizing: border-box;
}
.stab::after {
  content: "";
  position: absolute;
  right: -2px;
  top: 0;
  bottom: 0;
  width: 1px;
  background: #98a1ad;
  transform: skewX(-30deg);
}
.stab.wide { width: 33px; }
.stab.narrow { width: 22px; }
.stab.active {
  background: #fff;
  color: #222;
}
.stab.add {
  width: 20px;
  display: flex;
  align-items: center;
  justify-content: center;
}
.hscroll {
  flex: 1;
  margin-right: 10px;
  display: flex;
  align-items: stretch;
}
.hsplit {
  width: 3px;
  flex: none;
  background: #eef1f4;
  border: 1px solid #7f8894;
  box-sizing: border-box;
  margin: 1px;
}
.harrow {
  width: 8px;
  flex: none;
  text-align: center;
  font: 6px/10px "DejaVu Sans", sans-serif;
  color: #222;
}
.hthumb {
  width: 182px;
  flex: none;
  display: flex;
  align-items: center;
  justify-content: center;
  background: linear-gradient(#f4f6f8, #d9dee4);
  border: 1px solid #a9b0ba;
  box-sizing: border-box;
}
.hthumb i {
  width: 4px;
  height: 4px;
  background: repeating-linear-gradient(90deg, #8f98a4 0 1px, transparent 1px 2px);
}
.htrack { flex: 1; background: #e9ecf0; }

/* 상태 표시줄 */
.status {
  height: 11.5px;
  flex: none;
  display: flex;
  align-items: center;
  font-size: 7.4px;
  color: #4a5666;
  background: linear-gradient(#e9ecf0, #d6dbe1);
  border-top: 1px solid #b8bec6;
  box-sizing: border-box;
}
.ready {
  margin-left: 5px;
  width: 23px;
}
.rec { width: 123px; white-space: nowrap; }
.st-sep {
  width: 1px;
  height: 10px;
  background: #a9b0ba;
}
.views {
  margin-left: 433px;
  display: flex;
}
.view {
  width: 11px;
  height: 10px;
  display: flex;
  align-items: center;
  justify-content: center;
  box-sizing: border-box;
}
.view.on {
  background: linear-gradient(#fde9b0, #f8cf73);
  border: 1px solid #d2a24a;
}
.zoom {
  margin-left: 4px;
  width: 20px;
}
.zbtn {
  width: 9px;
  height: 9px;
  flex: none;
  margin-left: 2px;
  box-sizing: border-box;
  border: 1px solid #7f8894;
  border-radius: 50%;
  background: #f6f7f9;
  font: 700 7px/7px "Liberation Sans", sans-serif;
  text-align: center;
  color: #333;
}
.slider {
  width: 50px;
  height: 1px;
  flex: none;
  margin-left: 3px;
  background: #98a0ab;
  position: relative;
}
.slider i {
  position: absolute;
  left: 24px;
  top: -4px;
  width: 5px;
  height: 8px;
  background: linear-gradient(#fff, #cfd5dc);
  border: 1px solid #7f8894;
  box-sizing: border-box;
}

/* 작업 표시줄 */
.taskbar {
  flex: 1;
  min-height: 0;
  display: flex;
  align-items: flex-start;
  color: #fff;
  background: linear-gradient(#3e8af0, #2660dc 7%, #2459d6 50%, #2154cc);
}
.start {
  width: 52px;
  height: 16px;
  flex: none;
  margin-top: 2px;
  display: flex;
  align-items: center;
  justify-content: center;
  gap: 3px;
  box-sizing: border-box;
  border-radius: 0 6px 6px 0;
  background: linear-gradient(#5bb35c, #3c913f 40%, #2f7d33);
  font: italic 700 10px "Noto Sans CJK KR", sans-serif;
  text-shadow: 1px 1px 1px #1e4f20;
}
.dots {
  width: 2px;
  height: 33px;
  flex: none;
  margin: 2px 0 0 5px;
  background: repeating-linear-gradient(#173f9e 0 1px, #6d9bf0 1px 2px);
}
.quick {
  width: 86px;
  flex: none;
  position: relative;
  display: grid;
  grid-template-columns: repeat(5, 13px);
  grid-auto-rows: 17px;
  justify-items: center;
  align-items: center;
  padding: 1px 0 0 3px;
  box-sizing: border-box;
}
.quick + .dots { margin-left: 0; }
.more {
  position: absolute;
  right: 4px;
  top: 0;
  font: 700 7px/9px "Liberation Sans", sans-serif;
  color: #dbe7ff;
}
.task {
  width: 88.5px;
  height: 13px;
  flex: none;
  margin: 3.5px 0 0 1px;
  padding-left: 5px;
  box-sizing: border-box;
  display: flex;
  align-items: center;
  gap: 3px;
  white-space: nowrap;
  overflow: hidden;
  font-size: 7.2px;
  background: linear-gradient(#4f93f5, #3c80ec);
  border-radius: 1px;
}
.dots + .task { margin-left: 5px; }
.task.pressed {
  background: linear-gradient(#1d4bb0, #1c4cb8);
}
.tray {
  margin-left: auto;
  height: 35px;
  display: flex;
  align-items: center;
  flex: none;
}
.tray .dots {
  margin: 2px 4px 0 0;
}
.tray-ic {
  margin-right: 5px;
}
.chev {
  width: 10px;
  height: 10px;
  border-radius: 50%;
  background: #4ca6f2;
  border: 1px solid #bfe2ff;
  box-sizing: border-box;
  text-align: center;
  font: 700 8px/7px "Liberation Sans", sans-serif;
  margin-left: 4px;
  margin-right: -4px;
  position: relative;
  z-index: 1;
}
.clock {
  width: 49px;
  height: 33.5px;
  flex: none;
  margin-top: 2px;
  display: flex;
  flex-direction: column;
  align-items: center;
  justify-content: center;
  gap: 1px;
  font-size: 7.2px;
  line-height: 9.5px;
  background: linear-gradient(#1ba3ea, #1187dd);
  border-left: 1px solid #4ec2f5;
  box-sizing: border-box;
}
</style>
